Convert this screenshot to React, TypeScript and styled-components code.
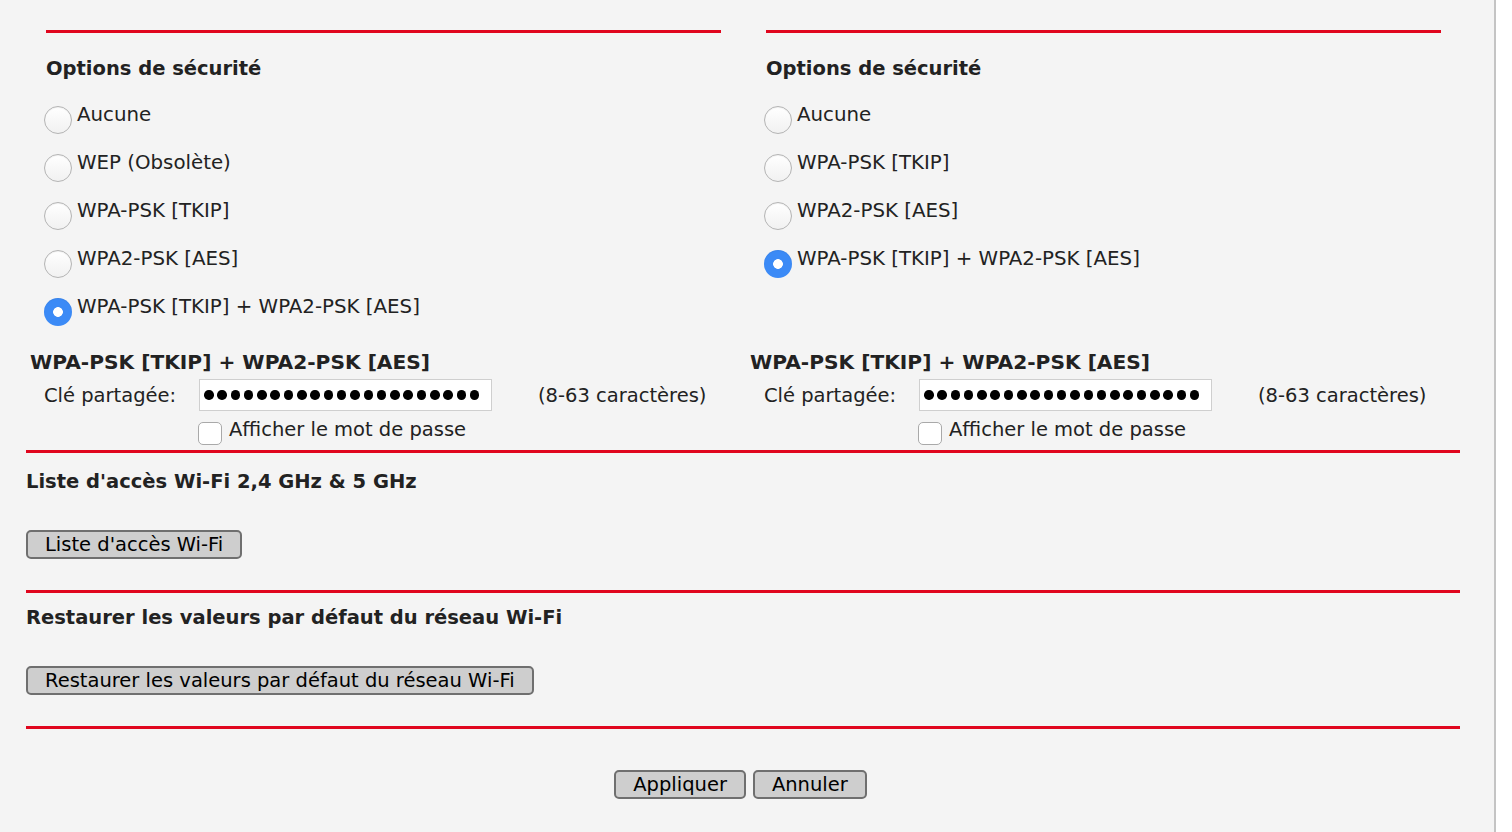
import React from "react";
import styled, { createGlobalStyle } from "styled-components";

const RED = "#e0061e";

const GlobalStyle = createGlobalStyle`
  html, body {
    margin: 0;
    background: #ffffff;
  }
  body {
    font-family: "DejaVu Sans", Verdana, sans-serif;
    color: #222222;
  }
`;

interface ISecurity {
  options: string[];
  selected: number;
}

const columns: ISecurity[] = [
  {
    options: [
      "Aucune",
      "WEP (Obsolète)",
      "WPA-PSK [TKIP]",
      "WPA2-PSK [AES]",
      "WPA-PSK [TKIP] + WPA2-PSK [AES]",
    ],
    selected: 4,
  },
  {
    options: ["Aucune", "WPA-PSK [TKIP]", "WPA2-PSK [AES]", "WPA-PSK [TKIP] + WPA2-PSK [AES]"],
    selected: 3,
  },
];

const DOTS = 21;

const App = () => {
  return (
    <Page>
      <GlobalStyle />
      <Content>
        <Columns>
          {columns.map((col, c) => (
            <SecurityBlock key={"sec" + c}>
              <TopRule />
              <Heading>Options de sécurité</Heading>
              <RadioList>
                {col.options.map((opt, i) => (
                  <RadioRow key={opt}>
                    <Radio type="radio" name={"sec" + c} defaultChecked={i === col.selected} />
                    <RadioLabel>{opt}</RadioLabel>
                  </RadioRow>
                ))}
              </RadioList>
            </SecurityBlock>
          ))}
          {columns.map((_, c) => (
            <KeyBlock key={"key" + c}>
              <SubHeading>WPA-PSK [TKIP] + WPA2-PSK [AES]</SubHeading>
              <KeyRow>
                <KeyLabel>Clé partagée:</KeyLabel>
                <PasswordField>
                  {Array.from({ length: DOTS }).map((_, i) => (
                    <Dot key={i} />
                  ))}
                </PasswordField>
                <Hint>(8-63 caractères)</Hint>
              </KeyRow>
              <ShowRow>
                <Checkbox type="checkbox" />
                <span>Afficher le mot de passe</span>
              </ShowRow>
            </KeyBlock>
          ))}
        </Columns>

        <Rule $top={8} />
        <Section>
          <Heading $top={17}>Liste d'accès Wi-Fi 2,4 GHz &amp; 5 GHz</Heading>
          <Button>Liste d'accès Wi-Fi</Button>
        </Section>

        <Rule $top={31} />
        <Section>
          <Heading $top={13}>Restaurer les valeurs par défaut du réseau Wi-Fi</Heading>
          <Button>Restaurer les valeurs par défaut du réseau Wi-Fi</Button>
        </Section>

        <Rule $top={31} />
        <Footer>
          <Button>Appliquer</Button>
          <Button>Annuler</Button>
        </Footer>
      </Content>
    </Page>
  );
};

const Page = styled.div`
  width: 1496px;
  min-height: 832px;
  box-sizing: border-box;
  background: #f4f4f4;
  border-right: 2px solid #c4c4c4;
`;

const Content = styled.div`
  width: 1434px;
  padding: 30px 0 0 26px;
`;

const Columns = styled.div`
  display: grid;
  grid-template-columns: 720px 714px;
  align-items: start;
`;

const SecurityBlock = styled.div`
  margin-left: 20px;
  width: 675px;
`;

const TopRule = styled.div`
  height: 3px;
  background: ${RED};
`;

const Heading = styled.div<{ $top?: number }>`
  margin-top: ${(p) => (p.$top !== undefined ? p.$top : 24)}px;
  font-size: 19.5px;
  font-weight: bold;
  line-height: 24px;
  color: #222222;
  white-space: nowrap;
`;

const SubHeading = styled(Heading)`
  margin-top: 0;
  font-size: 20.2px;
`;

const RadioList = styled.div`
  margin-top: 10px;
  margin-bottom: 19px;
`;

const RadioRow = styled.label`
  display: flex;
  align-items: flex-start;
  height: 48px;
`;

const Radio = styled.input`
  appearance: none;
  width: 28px;
  height: 28px;
  margin: 15px 5px 0 -2px;
  box-sizing: border-box;
  border-radius: 50%;
  border: 1px solid #b4b4b4;
  background: linear-gradient(#ffffff, #f1f1f1);
  box-shadow: inset 0 1px 1px rgba(0, 0, 0, 0.06);

  &:checked {
    border: none;
    background: radial-gradient(circle, #ffffff 0 4.5px, #3b8af6 5.2px);
  }
`;

const RadioLabel = styled.span`
  font-size: 19.8px;
  line-height: 48px;
  white-space: nowrap;
`;

const KeyBlock = styled.div`
  padding-left: 4px;
  font-size: 19.5px;
`;

const KeyRow = styled.div`
  display: flex;
  align-items: center;
  height: 32px;
  margin-top: 5px;
  padding-left: 14px;
  white-space: nowrap;
`;

const KeyLabel = styled.span`
  width: 155px;
`;

const PasswordField = styled.div`
  display: flex;
  align-items: center;
  gap: 3.8px;
  width: 293px;
  height: 32px;
  box-sizing: border-box;
  padding-left: 4px;
  background: #ffffff;
  border: 1px solid #cfcfcf;
`;

const Dot = styled.span`
  width: 9.5px;
  height: 9.5px;
  border-radius: 50%;
  background: #000000;
`;

const Hint = styled.span`
  margin-left: 46px;
`;

const ShowRow = styled.label`
  display: flex;
  align-items: flex-start;
  height: 24px;
  margin-top: 7px;
  padding-left: 168px;
  line-height: 24px;
  white-space: nowrap;
`;

const Checkbox = styled.input`
  appearance: none;
  width: 24px;
  height: 23px;
  margin: 4px 7px 0 0;
  box-sizing: border-box;
  border: 1px solid #a9a9a9;
  border-radius: 5px;
  background: #ffffff;
`;

const Rule = styled.div<{ $top: number }>`
  margin-top: ${(p) => p.$top}px;
  height: 3px;
  background: ${RED};
`;

const Section = styled.div`
  display: flex;
  flex-direction: column;
  align-items: flex-start;
  gap: 36px;
`;

const Button = styled.button`
  height: 29px;
  padding: 0 17px;
  box-sizing: border-box;
  border: 2px solid #6f6f6f;
  border-radius: 5px;
  background: #cecece;
  color: #000000;
  font-family: "DejaVu Sans", Verdana, sans-serif;
  font-size: 19.5px;
  line-height: 25px;
  white-space: nowrap;
`;

const Footer = styled.div`
  display: flex;
  justify-content: center;
  gap: 7px;
  margin-top: 41px;
  padding-right: 5px;
`;

export default App;
